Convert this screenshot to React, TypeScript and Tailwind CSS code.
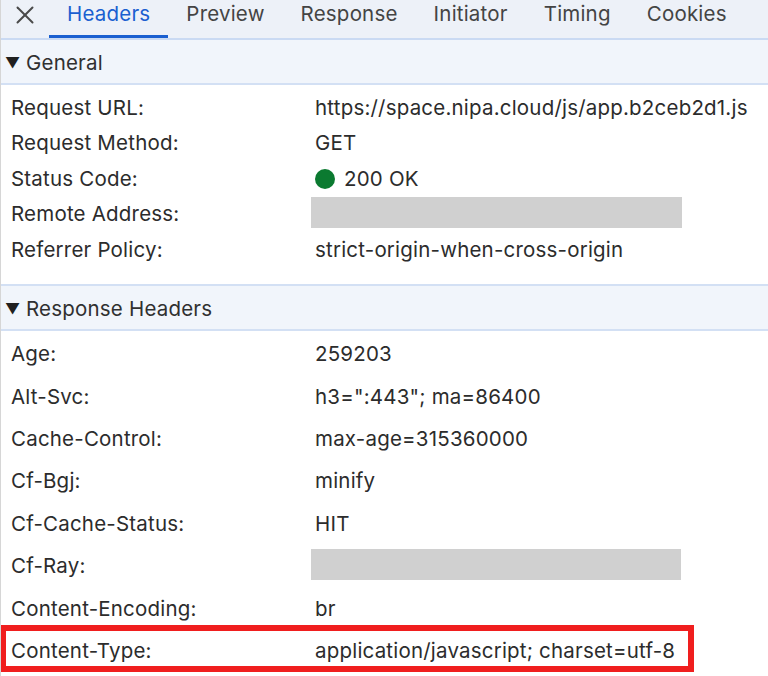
import { X } from 'lucide-react';

const tabs = ['Headers', 'Preview', 'Response', 'Initiator', 'Timing', 'Cookies'];

const general: Array<{ name: string; value?: string; redacted?: boolean; status?: boolean }> = [
  { name: 'Request URL:', value: 'https://space.nipa.cloud/js/app.b2ceb2d1.js' },
  { name: 'Request Method:', value: 'GET' },
  { name: 'Status Code:', value: '200 OK', status: true },
  { name: 'Remote Address:', redacted: true },
  { name: 'Referrer Policy:', value: 'strict-origin-when-cross-origin' },
];

const responseHeaders: Array<{ name: string; value?: string; redacted?: boolean; marked?: boolean }> = [
  { name: 'Age:', value: '259203' },
  { name: 'Alt-Svc:', value: 'h3=":443"; ma=86400' },
  { name: 'Cache-Control:', value: 'max-age=315360000' },
  { name: 'Cf-Bgj:', value: 'minify' },
  { name: 'Cf-Cache-Status:', value: 'HIT' },
  { name: 'Cf-Ray:', redacted: true },
  { name: 'Content-Encoding:', value: 'br' },
  { name: 'Content-Type:', value: 'application/javascript; charset=utf-8', marked: true },
];

const SectionHeader = ({ title }: { title: string }) => (
  <div className="h-[45px] flex items-center pt-[4px] bg-[#f1f5fb] border-b-2 border-[#d3e0f4]">
    <span className="w-[25px] pl-[4px] text-[15px] text-[#202020]">▼</span>
    <span className="text-[#303030]">{title}</span>
  </div>
);

export default function App() {
  return (
    <div className="w-[768px] h-[676px] overflow-hidden bg-white border-l border-[#d6d6d6] font-['Inter',Arial,sans-serif] text-[20.5px] tracking-[0.2px] text-[#2c2c2c]">
      {/* Tab bar */}
      <div className="h-[40px] flex bg-[#edf1f8] border-b-2 border-[#cadaf3]">
        <div className="w-[48px] h-[38px] flex items-center justify-center pb-[8px] text-[#4a4a4a]">
          <X className="w-[30px] h-[30px]" strokeWidth={1.6} />
        </div>
        {tabs.map((tab, i) => (
          <div
            key={tab}
            className={`h-[38px] px-[18px] flex items-center pb-[6px] border-b-[3px] ${
              i === 0 ? 'border-[#1a5fd0] text-[#1a5fd0]' : 'border-transparent text-[#444444]'
            }`}
          >
            {tab}
          </div>
        ))}
      </div>

      {/* General */}
      <SectionHeader title="General" />
      <div className="pt-[4px] pb-[17px]">
        {general.map((row) => (
          <div key={row.name} className="h-[35.5px] flex items-center pt-[3px]">
            <div className="w-[314px] pl-[10px]">{row.name}</div>
            {row.redacted ? (
              <div className="ml-[-4px] mt-[-5px] w-[371px] h-[31px] bg-[#d0d0d0]" />
            ) : row.status ? (
              <div className="flex items-center">
                <span className="w-[20px] h-[20px] rounded-full bg-[#0b7a30] mr-[9px]" />
                {row.value}
              </div>
            ) : (
              <div>{row.value}</div>
            )}
          </div>
        ))}
      </div>

      {/* Response Headers */}
      <div className="border-t-2 border-[#d3e0f4]">
        <SectionHeader title="Response Headers" />
      </div>
      <div className="pt-[2px]">
        {responseHeaders.map((row) => (
          <div key={row.name} className="relative h-[42.4px] flex items-center pt-[2px]">
            <div className="w-[314px] pl-[10px]">{row.name}</div>
            {row.redacted ? (
              <div className="ml-[-4px] mt-[-4px] w-[370px] h-[31px] bg-[#d0d0d0]" />
            ) : (
              <div>{row.value}</div>
            )}
            {row.marked && (
              <div className="absolute left-[-1px] top-[-4px] w-[694px] h-[47px] border-[6px] border-[#f01e1e]" />
            )}
          </div>
        ))}
      </div>
    </div>
  );
}
